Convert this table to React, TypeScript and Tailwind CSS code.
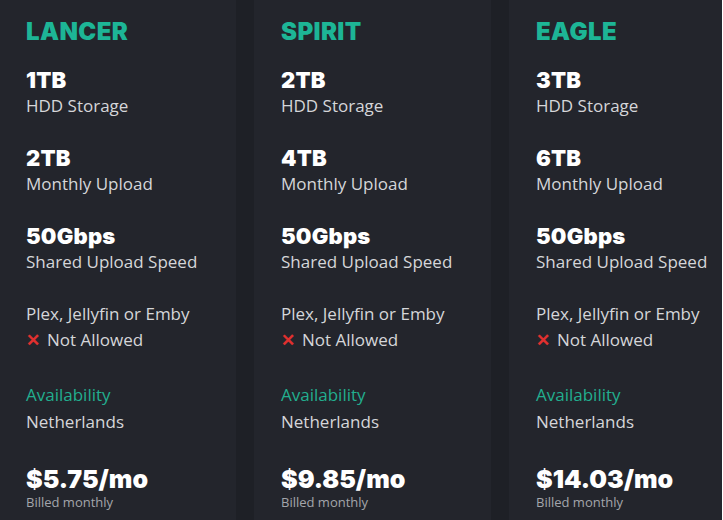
import React from 'react'

interface Plan {
  name: string
  storage: string
  upload: string
  price: string
}

const plans: Plan[] = [
  { name: 'LANCER', storage: '1TB', upload: '2TB', price: '$5.75' },
  { name: 'SPIRIT', storage: '2TB', upload: '4TB', price: '$9.85' },
  { name: 'EAGLE', storage: '3TB', upload: '6TB', price: '$14.03' },
]

const heavy = { fontFamily: '"Inter", "Liberation Sans", sans-serif' }

const Stat: React.FC<{ value: string; label: string }> = ({ value, label }) => (
  <div>
    <div className="text-[22px] leading-[25px] font-black text-white tracking-[0.2px]" style={heavy}>
      {value}
    </div>
    <div className="text-[17px] leading-[25px] text-[#d5d6d9]">{label}</div>
  </div>
)

const PlanCard: React.FC<{ plan: Plan }> = ({ plan }) => (
  <div className="w-[237px] shrink-0 bg-[#23252c] pl-[27px] pt-[17px] h-[520px]">
    <h2 className="text-[24px] leading-[30px] font-black text-[#1db596] tracking-[0.4px]" style={heavy}>
      {plan.name}
    </h2>
    <div className="mt-[21px] flex flex-col gap-[28px]">
      <Stat value={plan.storage} label="HDD Storage" />
      <Stat value={plan.upload} label="Monthly Upload" />
      <Stat value="50Gbps" label="Shared Upload Speed" />
    </div>
    <div className="mt-[27px] text-[17px] leading-[26px] text-[#d5d6d9]">
      <div>Plex, Jellyfin or Emby</div>
      <div className="flex items-center gap-[7px]">
        <span className="text-[#e0302f] text-[17px] font-bold">✕</span>
        <span>Not Allowed</span>
      </div>
    </div>
    <div className="mt-[28px] text-[17px] leading-[27px]">
      <div className="text-[#22ae8f]">Availability</div>
      <div className="text-[#d5d6d9]">Netherlands</div>
    </div>
    <div className="mt-[29px]">
      <div className="text-[25px] leading-[30px] font-black text-white tracking-[0px]" style={heavy}>
        {plan.price}/mo
      </div>
      <div className="text-[13px] leading-[16px] text-[#a3a5ab]">Billed monthly</div>
    </div>
  </div>
)

export default function App() {
  return (
    <div
      className="w-[723px] h-[520px] overflow-hidden bg-[#1e2026] flex gap-[18px] ml-[-1px]"
      style={{ fontFamily: '"Open Sans", "Liberation Sans", sans-serif' }}
    >
      {plans.map((p) => (
        <PlanCard key={p.name} plan={p} />
      ))}
    </div>
  )
}
